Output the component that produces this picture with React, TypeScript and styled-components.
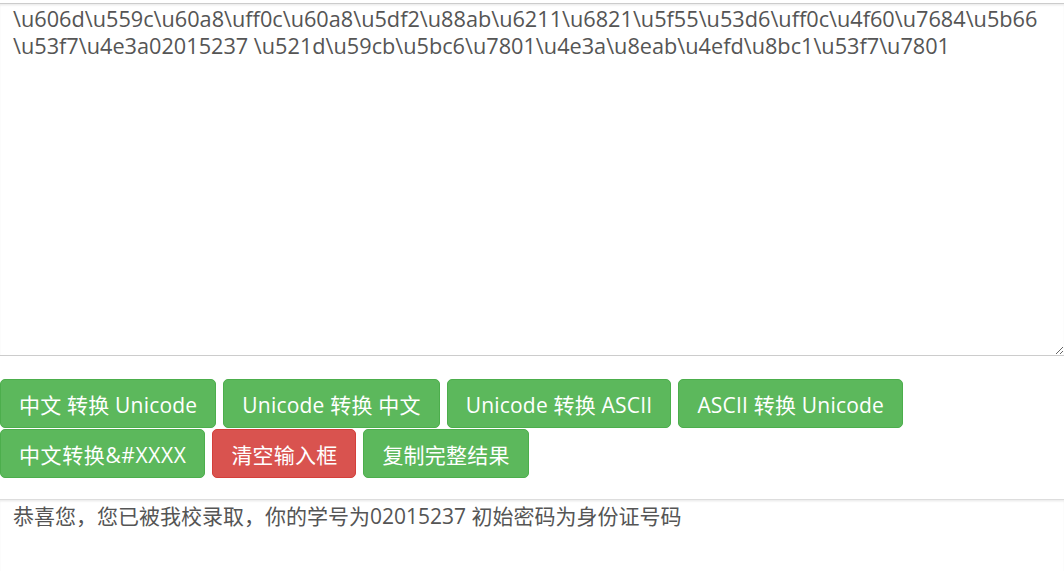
import React from "react";
import styled, { createGlobalStyle } from "styled-components";

const Global = createGlobalStyle`
  html, body { margin: 0; padding: 0; background: #fff; }
  body {
    font-family: "Open Sans", "Noto Sans CJK SC", sans-serif;
    color: #555;
    overflow: hidden;
  }
`;

const Page = styled.div`
  width: 1064px;
  padding-top: 3px;
`;

const Input = styled.textarea`
  display: block;
  box-sizing: border-box;
  width: 1064px;
  height: 353px;
  margin: 0;
  padding: 1px 0 0 13px;
  border: none;
  border-top: 1.5px solid #ccc;
  border-bottom: 1.5px solid #ccc;
  box-shadow: inset 0 1.5px 1.5px rgba(0, 0, 0, 0.075);
  font-family: "Open Sans", "Noto Sans CJK SC", sans-serif;
  font-size: 21.7px;
  line-height: 27px;
  color: #555;
  resize: vertical;
  outline: none;
  white-space: pre-wrap;
  overflow: hidden;
`;

const Buttons = styled.div`
  display: flex;
  flex-direction: column;
  gap: 1px;
  margin-top: 23px;
`;

const Row = styled.div`
  display: flex;
  gap: 7px;
`;

const Button = styled.button<{ $danger?: boolean; $wide?: boolean }>`
  box-sizing: border-box;
  height: 49px;
  padding: 0 18px;
  border-radius: 5px;
  border: 1px solid ${(p) => (p.$danger ? "#d43f3a" : "#4cae4c")};
  background: ${(p) => (p.$danger ? "#d9534f" : "#5cb85c")};
  color: #fff;
  font-family: "Open Sans", "Noto Sans CJK SC", sans-serif;
  font-size: 21px;
  letter-spacing: ${(p) => (p.$wide ? "0.6px" : "0.2px")};
  white-space: nowrap;
  cursor: pointer;
`;

const Result = styled.div`
  margin-top: 21px;
  border-top: 1.5px solid #ddd;
  box-shadow: inset 0 1.5px 1.5px rgba(0, 0, 0, 0.075);
  padding: 1px 13px 0;
  height: 70px;
  font-size: 21px;
  line-height: 30px;
  color: #555;
`;

const text =
  "\\u606d\\u559c\\u60a8\\uff0c\\u60a8\\u5df2\\u88ab\\u6211\\u6821\\u5f55\\u53d6\\uff0c\\u4f60\\u7684\\u5b66\n\\u53f7\\u4e3a02015237 \\u521d\\u59cb\\u5bc6\\u7801\\u4e3a\\u8eab\\u4efd\\u8bc1\\u53f7\\u7801";

export default function App() {
  return (
    <Page>
      <Global />
      <Input defaultValue={text} spellCheck={false} />
      <Buttons>
        <Row>
          <Button>中文 转换 Unicode</Button>
          <Button>Unicode 转换 中文</Button>
          <Button>Unicode 转换 ASCII</Button>
          <Button>ASCII 转换 Unicode</Button>
        </Row>
        <Row>
          <Button $wide>中文转换&amp;#XXXX</Button>
          <Button $danger>清空输入框</Button>
          <Button>复制完整结果</Button>
        </Row>
      </Buttons>
      <Result>恭喜您，您已被我校录取，你的学号为02015237 初始密码为身份证号码</Result>
    </Page>
  );
}
